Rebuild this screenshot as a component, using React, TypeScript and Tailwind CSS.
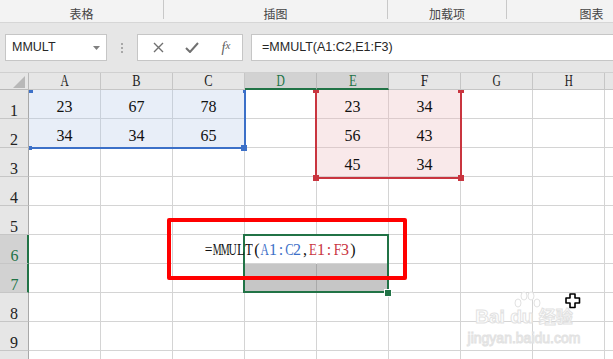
import React from "react";

const COLS = ["A", "B", "C", "D", "E", "F", "G", "H", "I"];
const ROWS = [1, 2, 3, 4, 5, 6, 7, 8, 9, 10];

const values: Record<string, string> = {
    A1: "23",
    B1: "67",
    C1: "78",
    A2: "34",
    B2: "34",
    C2: "65",
    E1: "23",
    F1: "34",
    E2: "56",
    F2: "43",
    E3: "45",
    F3: "34",
};

// squeeze wide glyphs so every char takes a half-width 8px slot, like SimSun
const squeeze: Record<string, string> = {
    M: "scale-x-[0.62]",
    U: "scale-x-[0.72]",
    A: "scale-x-[0.72]",
    C: "scale-x-[0.78]",
    E: "scale-x-[0.8]",
    T: "scale-x-[0.8]",
    L: "scale-x-[0.8]",
    F: "scale-x-[0.85]",
    G: "scale-x-[0.72]",
    H: "scale-x-[0.7]",
    B: "scale-x-[0.78]",
    D: "scale-x-[0.72]",
    I: "scale-x-[0.9]",
    "=": "scale-x-[0.85]",
};

function Mono({ text }: { text: string }) {
    return (
        <>
            {text.split("").map((ch, i) => (
                <span key={i} className="inline-flex w-[8px] justify-center">
                    <span className={`inline-block ${squeeze[ch] ?? ""}`}>{ch}</span>
                </span>
            ))}
        </>
    );
}

function cellClass(col: string, row: number) {
    const inBlue = ["A", "B", "C"].includes(col) && row <= 2;
    const inRed = ["E", "F"].includes(col) && row <= 3;
    if (col === "D" && row === 7) return "bg-[#c6c6c6] border-r-[#a9a9a9] border-b-[#d4d4d4]";
    if (col === "E" && row === 7) return "bg-[#c6c6c6] border-r-[#d4d4d4] border-b-[#d4d4d4]";
    if (col === "D" && row === 6) return "bg-white border-r-white border-b-[#d4d4d4]";
    if (inBlue) return "bg-[#e8eef8] border-r-[#c9d0da] border-b-[#c9d0da]";
    if (inRed) return "bg-[#f9e9ea] border-r-[#dccbcc] border-b-[#dccbcc]";
    return "bg-white border-r-[#d4d4d4] border-b-[#d4d4d4]";
}

function Ribbon() {
    const groups = [
        { label: "表格", w: "w-[164px]" },
        { label: "插图", w: "w-[224px]" },
        { label: "加载项", w: "w-[119px]" },
        { label: "图表", w: "w-[170px]" },
    ];
    return (
        <div className="flex h-[23px] bg-[#f3f3f3] border-b border-[#d6d6d6] shrink-0">
            {groups.map((g) => (
                <div key={g.label} className={`${g.w} shrink-0 flex items-start relative`}>
                    <div className="flex-1 text-center text-[12px] leading-[14px] pt-[7px] text-[#444] font-['Noto_Sans_CJK_SC',sans-serif]">
                        {g.label}
                    </div>
                    <div className="w-px h-[19px] bg-[#c8c8c8]"></div>
                </div>
            ))}
        </div>
    );
}

function FormulaBar() {
    return (
        <div className="h-[49px] bg-[#e6e6e6] shrink-0 flex items-start pt-[11px] pl-[5px] font-['Liberation_Sans',sans-serif] text-[12.5px] text-[#262626]">
            <div className="w-[102px] h-[27px] bg-white border border-[#c6c6c6] flex items-center pl-[6px] pr-[6px]">
                <span className="flex-1">MMULT</span>
                <svg width="7" height="4" viewBox="0 0 7 4">
                    <polygon points="0,0 7,0 3.5,4" fill="#808080" />
                </svg>
            </div>
            <div className="w-[30px] h-[27px] flex flex-col items-center justify-center gap-[2px]">
                <div className="w-[2px] h-[2px] bg-[#a8a8a8]"></div>
                <div className="w-[2px] h-[2px] bg-[#a8a8a8]"></div>
                <div className="w-[2px] h-[2px] bg-[#a8a8a8]"></div>
            </div>
            <div className="w-[106px] h-[27px] bg-white border border-[#c6c6c6] flex items-center">
                <div className="w-[36px] flex justify-center pl-[4px]">
                    <svg width="11" height="11" viewBox="0 0 11 11">
                        <path d="M1 1 L10 10 M10 1 L1 10" stroke="#707070" strokeWidth="1.4" />
                    </svg>
                </div>
                <div className="w-[36px] flex justify-center">
                    <svg width="14" height="11" viewBox="0 0 14 11">
                        <path d="M1 6 L5 10 L13 1" stroke="#707070" strokeWidth="2" fill="none" />
                    </svg>
                </div>
                <div className="w-[32px] flex justify-center font-['Liberation_Serif',serif] italic text-[14px] text-[#606060]">
                    f<span className="text-[11px]">x</span>
                </div>
            </div>
            <div className="ml-[8px] flex-1 h-[27px] bg-white border border-[#c6c6c6] border-r-0 flex items-center pl-[10px]">
                =MMULT(A1:C2,E1:F3)
            </div>
        </div>
    );
}

function HeaderRow() {
    return (
        <div className="flex h-[18px] shrink-0 bg-[#e6e6e6] border-t border-[#d0d0d0]">
            <div className="w-[29px] shrink-0 border-r border-b border-[#b9b9b9] relative">
                <svg className="absolute left-0 top-0" width="28" height="17" viewBox="0 0 28 17">
                    <polygon points="25,3 25,15 13,15" fill="#b8b8b8" />
                </svg>
            </div>
            {COLS.map((c) => {
                const sel = c === "D" || c === "E";
                return (
                    <div
                        key={c}
                        className={
                            sel
                                ? "w-[72px] shrink-0 border-r border-[#b9b9b9] border-b-2 border-b-[#217346] bg-[#d2d2d2] text-[#217346] flex items-end justify-center pb-[1px]"
                                : "w-[72px] shrink-0 border-r border-b border-[#c6c6c6] text-[#222] flex items-end justify-center pb-[2px]"
                        }
                    >
                        <span className="leading-[12px] text-[16px]">
                            <Mono text={c} />
                        </span>
                    </div>
                );
            })}
        </div>
    );
}

function GridRow({ row }: { row: number }) {
    const sel = row === 6 || row === 7;
    return (
        <div className="flex h-[29px] shrink-0">
            <div
                className={
                    sel
                        ? "w-[29px] shrink-0 bg-[#d2d2d2] border-b border-b-[#c6c6c6] border-r-2 border-r-[#217346] text-[#217346] flex items-end justify-center pl-[2px] pb-[1px]"
                        : "w-[29px] shrink-0 bg-[#e6e6e6] border-b border-b-[#c6c6c6] border-r border-r-[#a8a8a8] text-[#222] flex items-end justify-center pb-[1px]"
                }
            >
                <span className="leading-[12px] text-[16px]">{row}</span>
            </div>
            {COLS.map((c) => (
                <div
                    key={c}
                    className={`w-[72px] shrink-0 border-r border-b flex items-end justify-center pb-[5px] ${cellClass(c, row)}`}
                >
                    <span className="leading-[12px] text-[16px] text-[#111]">{values[`${c}${row}`] ?? ""}</span>
                </div>
            ))}
        </div>
    );
}

function Cursor() {
    return (
        <svg className="absolute left-[565px] top-[293px]" width="16" height="16" viewBox="0 0 16 16">
            <polygon
                points="5,1 10,1 10,5 14.5,5 14.5,10 10,10 10,14.5 5,14.5 5,10 1,10 1,5 5,5"
                fill="white"
                stroke="black"
                strokeWidth="1.6"
                strokeLinejoin="round"
            />
        </svg>
    );
}

function Watermark() {
    return (
        <div className="absolute left-[466px] top-[291px] w-[116px] flex flex-col items-center text-white [-webkit-text-stroke:1px_#e2e2e2] font-['Liberation_Sans',sans-serif] font-bold whitespace-nowrap">
            <svg width="30" height="20" viewBox="0 0 30 20" className="ml-[6px] -mb-[5px]">
                <g fill="white" stroke="#e2e2e2" strokeWidth="1">
                    <ellipse cx="6" cy="12" rx="3" ry="4" />
                    <ellipse cx="12" cy="5" rx="3" ry="4" />
                    <ellipse cx="19" cy="5" rx="3" ry="4" />
                    <ellipse cx="25" cy="12" rx="3" ry="4" />
                </g>
            </svg>
            <div className="text-[19px] leading-[20px]">
                Bai du <span className="font-['Noto_Sans_CJK_SC',sans-serif] text-[17px]">经验</span>
            </div>
            <div className="text-[14px] leading-[16px] mt-[3px] font-normal">jingyan.baidu.com</div>
        </div>
    );
}

export default function App() {
    return (
        <div className="w-[613px] h-[359px] overflow-hidden relative bg-white flex flex-col font-['Liberation_Serif',serif]">
            <Ribbon />
            <FormulaBar />
            <HeaderRow />
            {ROWS.map((r) => (
                <GridRow key={r} row={r} />
            ))}

            {/* blue reference range A1:C2 */}
            <div className="absolute left-[29px] top-[90px] w-[217px] h-[59px] border-r-2 border-b-2 border-[#3c70c8]"></div>
            <div className="absolute left-[29px] top-[90px] w-[4px] h-[3px] bg-[#3c70c8]"></div>
            <div className="absolute left-[243px] top-[90px] w-[3px] h-[3px] bg-[#3c70c8]"></div>
            <div className="absolute left-[29px] top-[146px] w-[3px] h-[4px] bg-[#3c70c8]"></div>
            <div className="absolute left-[241px] top-[145px] w-[6px] h-[6px] bg-[#3c70c8]"></div>

            {/* red reference range E1:F3 */}
            <div className="absolute left-[315px] top-[90px] w-[147px] h-[89px] border-l-2 border-r-2 border-b-2 border-[#c9353f]"></div>
            <div className="absolute left-[313px] top-[90px] w-[6px] h-[3px] bg-[#c9353f]"></div>
            <div className="absolute left-[458px] top-[90px] w-[6px] h-[3px] bg-[#c9353f]"></div>
            <div className="absolute left-[313px] top-[175px] w-[6px] h-[6px] bg-[#c9353f]"></div>
            <div className="absolute left-[458px] top-[175px] w-[6px] h-[6px] bg-[#c9353f]"></div>

            {/* selection D6:E7 */}
            <div className="absolute left-[243px] top-[234px] w-[146px] h-[59px] border-2 border-[#217346]"></div>
            <div className="absolute left-[384px] top-[289px] w-[8px] h-[8px] bg-[#217346] border border-white"></div>

            {/* formula being edited */}
            <div className="absolute left-[205px] top-[235px] h-[29px] flex items-end pb-[7px]">
                <span className="leading-[14px] text-[16px] text-[#111] whitespace-nowrap">
                    <Mono text="=MMULT(" />
                    <span className="text-[#3c70c8]">
                        <Mono text="A1:C2" />
                    </span>
                    <Mono text="," />
                    <span className="text-[#c9353f]">
                        <Mono text="E1:F3" />
                    </span>
                    <Mono text=")" />
                </span>
            </div>

            {/* annotation */}
            <div className="absolute left-[167px] top-[218px] w-[240px] h-[62px] border-4 border-[#ff0000] rounded-[2px]"></div>

            <Watermark />
            <Cursor />
        </div>
    );
}
